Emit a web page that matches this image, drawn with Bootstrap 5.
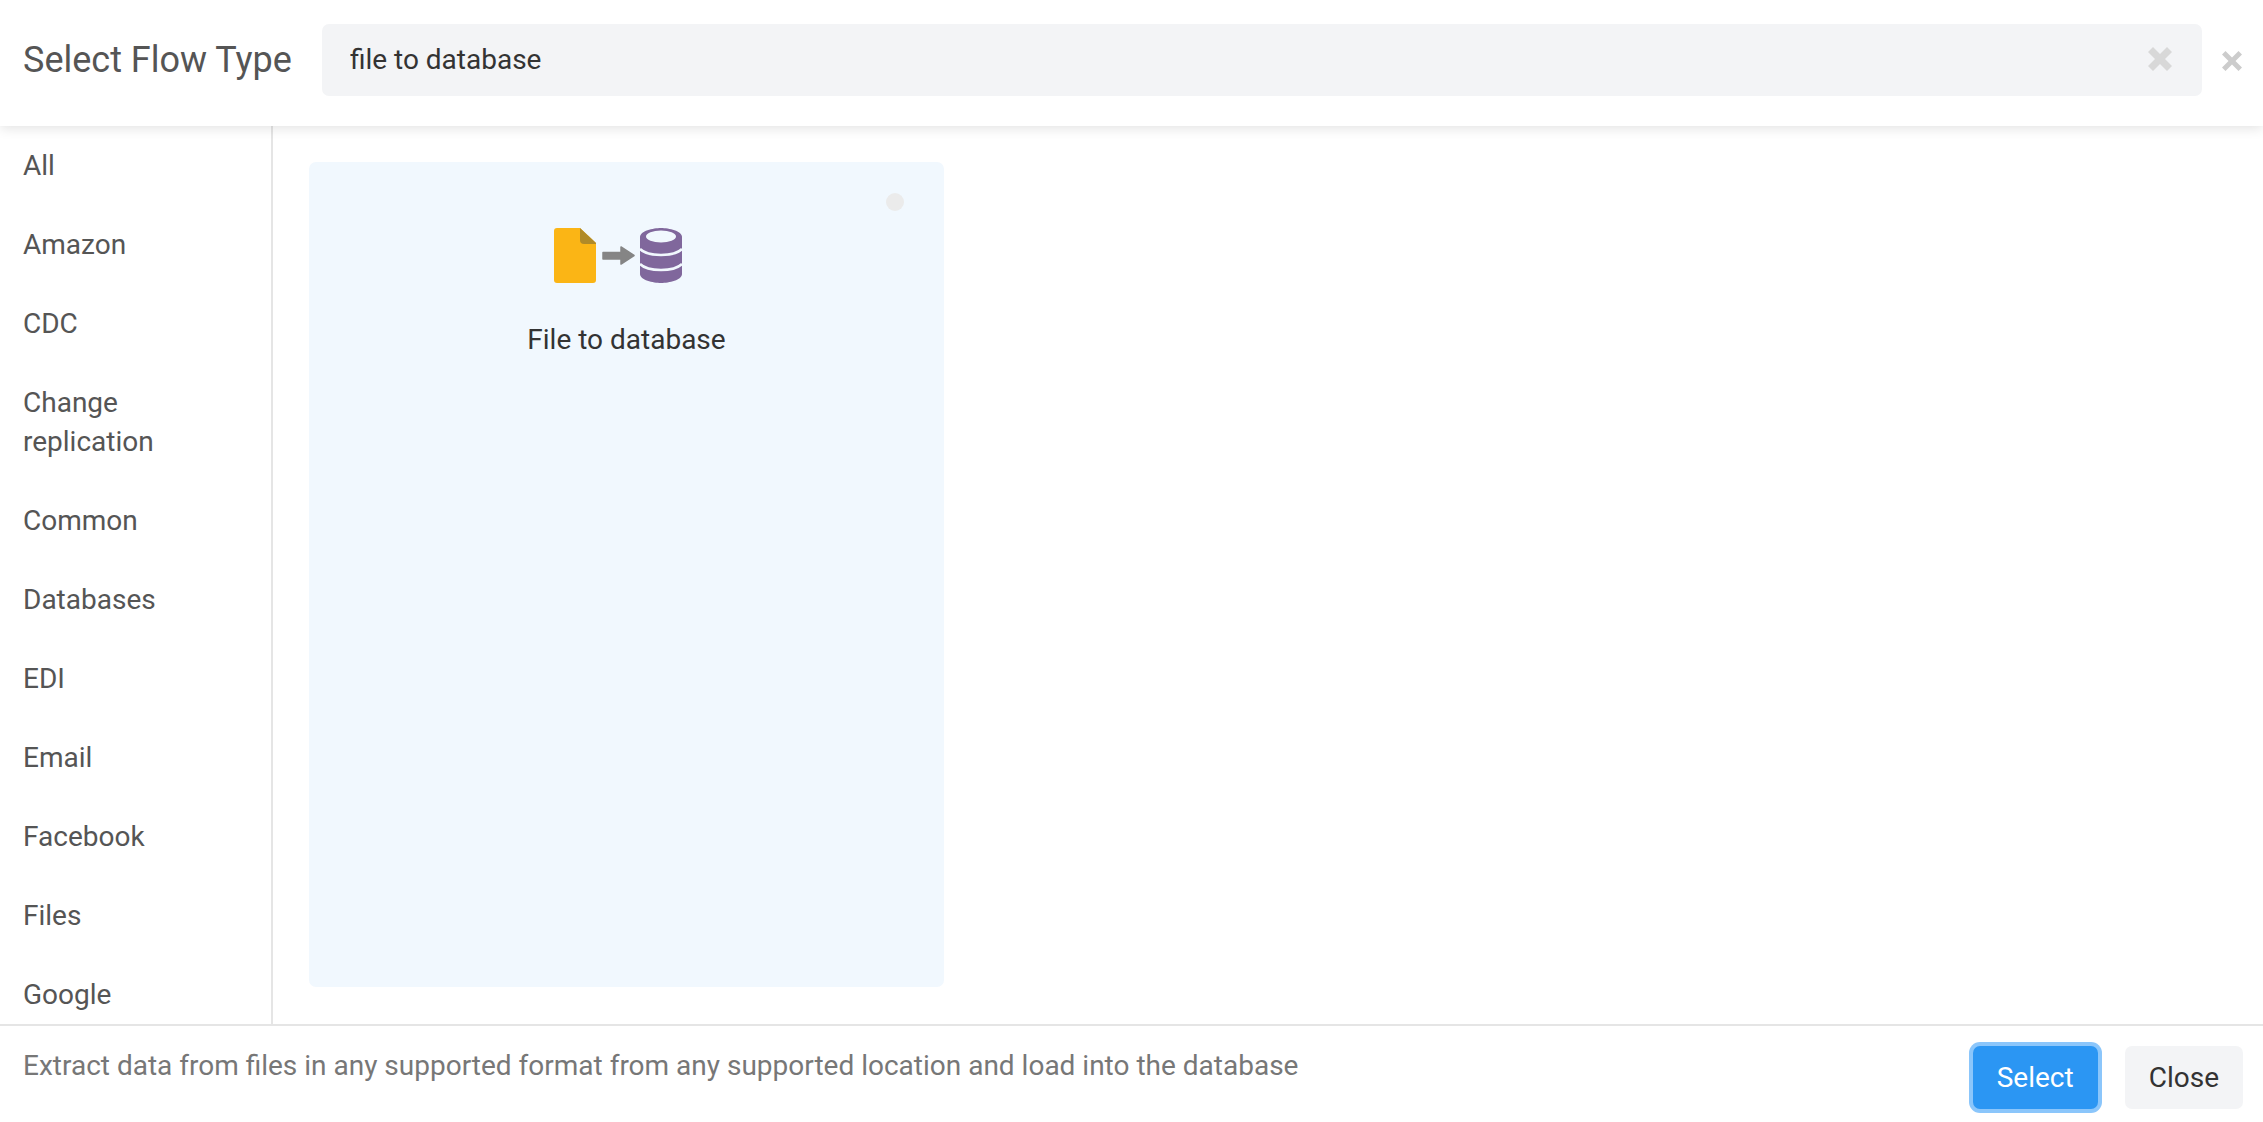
<!DOCTYPE html>
<html lang="en">
<head>
<meta charset="utf-8">
<title>Select Flow Type</title>
<link href="https://cdn.jsdelivr.net/npm/bootstrap@5.3.0/dist/css/bootstrap.min.css" rel="stylesheet">
<style>
html,body{height:100%;overflow:hidden}
body{font-family:Roboto,"Liberation Sans",sans-serif;color:#333;background:#fff;font-size:28px}
.flow-shell{height:1122px}
.flow-head{height:126px;padding:24px 21px 30px 23px;box-shadow:0 2px 12px rgba(0,0,0,.12);position:relative;z-index:2;background:#fff}
.flow-title{font-size:36px;font-weight:400;color:#555;margin:0 30px 0 0;white-space:nowrap;line-height:72px}
.flow-search{height:72px;background:#f3f4f6;border-radius:7px;padding:0 30px 0 28px}
.flow-search-input{background:transparent;border:0;outline:0;padding:0;font-size:28px;color:#333;flex:1 1 auto;min-width:0;font-family:inherit}
.flow-x-big{width:24px;height:24px;color:#d8d8d8;flex:none;margin-bottom:2px}
.flow-x-small{width:20px;height:20px;color:#ccc;margin-left:20px;margin-top:27px;flex:none}
.flow-body{height:898px}
.flow-side{width:273px;border-right:2px solid #e5e5e5;overflow:hidden;flex:none}
.flow-side-item{display:block;padding:20px 40px 20px 23px;line-height:39px;color:#555;font-size:28px;text-decoration:none}
.flow-main{padding:36px 36px 37px 36px;min-width:0}
.flow-tile{width:635px;height:825px;background:#f1f8fe;border-radius:7px;padding-top:66px;position:relative}
.flow-dot{position:absolute;top:31px;left:577px;width:18px;height:18px;border-radius:50%;background:#ebebeb}
.flow-tile-icon{width:128px;height:56px;display:block;margin-left:245px}
.flow-tile-name{font-size:28px;color:#333;line-height:39px;margin-top:36px}
.flow-foot{height:98px;border-top:2px solid #e5e5e5;padding:0 20px 0 23px}
.flow-desc{font-size:28px;color:#777;line-height:39px;padding-top:20px}
.flow-actions{padding-top:20px;flex:none}
.flow-btn{font-size:28px;line-height:39px;padding:12px 24px;border-radius:7px;border:0;font-family:inherit}
.flow-btn-select{background:#2b96f3;color:#fff;box-shadow:0 0 0 4px #8bc6fb}
.flow-btn-close{background:#f3f4f6;color:#333;margin-left:27px}
</style>
</head>
<body>
<div class="flow-shell d-flex flex-column">
  <header class="flow-head d-flex align-items-start">
    <h1 class="flow-title">Select Flow Type</h1>
    <div class="flow-search d-flex align-items-center flex-grow-1">
      <input class="flow-search-input" type="text" value="file to database" aria-label="Search">
      <svg class="flow-x-big" viewBox="0 0 24 24" aria-hidden="true"><path fill="currentColor" d="M5 0 12 7 19 0 24 5 17 12 24 19 19 24 12 17 5 24 0 19 7 12 0 5Z"/></svg>
    </div>
    <svg class="flow-x-small" viewBox="0 0 20 20" aria-hidden="true"><path fill="currentColor" d="M3.500 0 10 6.500 16.500 0 20 3.500 13.500 10 20 16.500 16.500 20 10 13.500 3.500 20 0 16.500 6.500 10 0 3.500Z"/></svg>
  </header>
  <div class="flow-body d-flex">
    <nav class="flow-side">
      <a class="flow-side-item" href="#">All</a>
      <a class="flow-side-item" href="#">Amazon</a>
      <a class="flow-side-item" href="#">CDC</a>
      <a class="flow-side-item" href="#">Change replication</a>
      <a class="flow-side-item" href="#">Common</a>
      <a class="flow-side-item" href="#">Databases</a>
      <a class="flow-side-item" href="#">EDI</a>
      <a class="flow-side-item" href="#">Email</a>
      <a class="flow-side-item" href="#">Facebook</a>
      <a class="flow-side-item" href="#">Files</a>
      <a class="flow-side-item" href="#">Google</a>
    </nav>
    <main class="flow-main flex-grow-1">
      <div class="flow-tile text-center">
        <span class="flow-dot"></span>
        <svg class="flow-tile-icon" viewBox="0 0 128 56" aria-hidden="true">
          <path fill="#fbb515" d="M3 0H26L42 15V52Q42 55 39 55H3Q0 55 0 52V3Q0 0 3 0Z"/>
          <path fill="#b08a28" d="M26 0 42 15V16H30Q26 16 26 12Z"/>
          <path fill="#858585" stroke="#858585" stroke-width="1.500" stroke-linejoin="round" d="M49 24.500H67V19L80 27.500 67 36V31H49Z"/>
          <path fill="#80679c" d="M86 9C86 3 99 0 107 0S128 3 128 9V46C128 52 115 55 107 55S86 52 86 46Z"/>
          <ellipse cx="107" cy="8.500" rx="15" ry="6" fill="#f1f8fe"/>
          <path fill="none" stroke="#f1f8fe" stroke-width="2.500" d="M86 21C91 26 99 27 107 27S123 26 128 21"/>
          <path fill="none" stroke="#f1f8fe" stroke-width="2.500" d="M86 36C91 41 99 42 107 42S123 41 128 36"/>
        </svg>
        <div class="flow-tile-name">File to database</div>
      </div>
    </main>
  </div>
  <footer class="flow-foot d-flex justify-content-between align-items-start">
    <div class="flow-desc">Extract data from files in any supported format from any supported location and load into the database</div>
    <div class="flow-actions d-flex">
      <button class="flow-btn flow-btn-select" type="button">Select</button>
      <button class="flow-btn flow-btn-close" type="button">Close</button>
    </div>
  </footer>
</div>
<script src="https://cdn.jsdelivr.net/npm/bootstrap@5.3.0/dist/js/bootstrap.bundle.min.js"></script>
</body>
</html>
